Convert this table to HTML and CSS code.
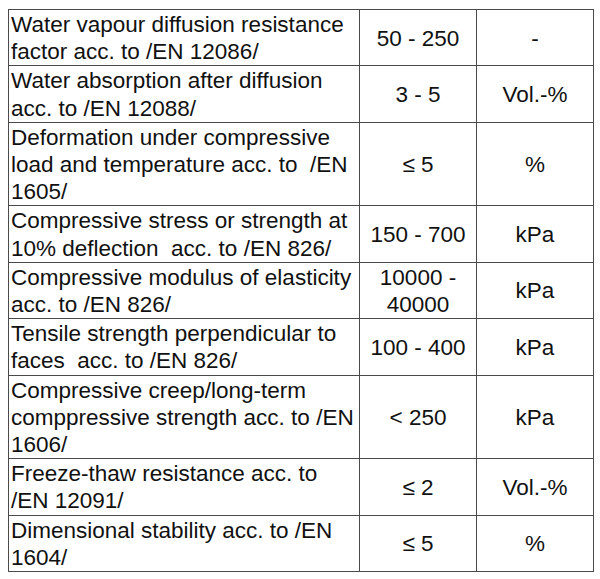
FILE: index.html
```html
<!DOCTYPE html>
<html>
<head>
<meta charset="utf-8">
<link rel="stylesheet" href="styles.css">
</head>
<body>
<table class="props">
  <colgroup>
    <col class="c-prop">
    <col class="c-val">
    <col class="c-unit">
  </colgroup>
  <tr><td class="prop">Water vapour diffusion resistance<br>factor acc. to /EN 12086/</td><td class="val">50 - 250</td><td class="val">-</td></tr>
  <tr><td class="prop">Water absorption after diffusion<br>acc. to /EN 12088/</td><td class="val">3 - 5</td><td class="val">Vol.-%</td></tr>
  <tr><td class="prop">Deformation under compressive<br>load and temperature acc. to &nbsp;/EN<br>1605/</td><td class="val">≤ 5</td><td class="val">%</td></tr>
  <tr><td class="prop">Compressive stress or strength at<br>10% deflection &nbsp;acc. to /EN 826/</td><td class="val">150 - 700</td><td class="val">kPa</td></tr>
  <tr><td class="prop">Compressive modulus of elasticity<br>acc. to /EN 826/</td><td class="val">10000 -<br>40000</td><td class="val">kPa</td></tr>
  <tr><td class="prop">Tensile strength perpendicular to<br>faces &nbsp;acc. to /EN 826/</td><td class="val">100 - 400</td><td class="val">kPa</td></tr>
  <tr><td class="prop">Compressive creep/long-term<br>comppressive strength acc. to /EN<br>1606/</td><td class="val">&lt; 250</td><td class="val">kPa</td></tr>
  <tr><td class="prop">Freeze-thaw resistance acc. to<br>/EN 12091/</td><td class="val">≤ 2</td><td class="val">Vol.-%</td></tr>
  <tr><td class="prop">Dimensional stability acc. to /EN<br>1604/</td><td class="val">≤ 5</td><td class="val">%</td></tr>
</table>
</body>
</html>
```
FILE: styles.css
```css
html, body {
  margin: 0;
  padding: 0;
  background: #ffffff;
}
body {
  padding: 9px 0 0 8px;
  font-family: "Liberation Sans", Arial, sans-serif;
  color: #111111;
}
.props {
  border-collapse: collapse;
  table-layout: fixed;
  width: 586px;
  font-size: 22.5px;
  line-height: 27.2px;
}
.c-prop { width: 351px; }
.c-val { width: 117px; }
.c-unit { width: 117px; }
.props td {
  border: 1px solid #4a4a4a;
  padding: 1px 0 0 2px;
  vertical-align: middle;
  white-space: nowrap;
  overflow: hidden;
}
.props td.val {
  text-align: center;
  padding-left: 0;
}
.props td.prop {
  vertical-align: top;
}
```
